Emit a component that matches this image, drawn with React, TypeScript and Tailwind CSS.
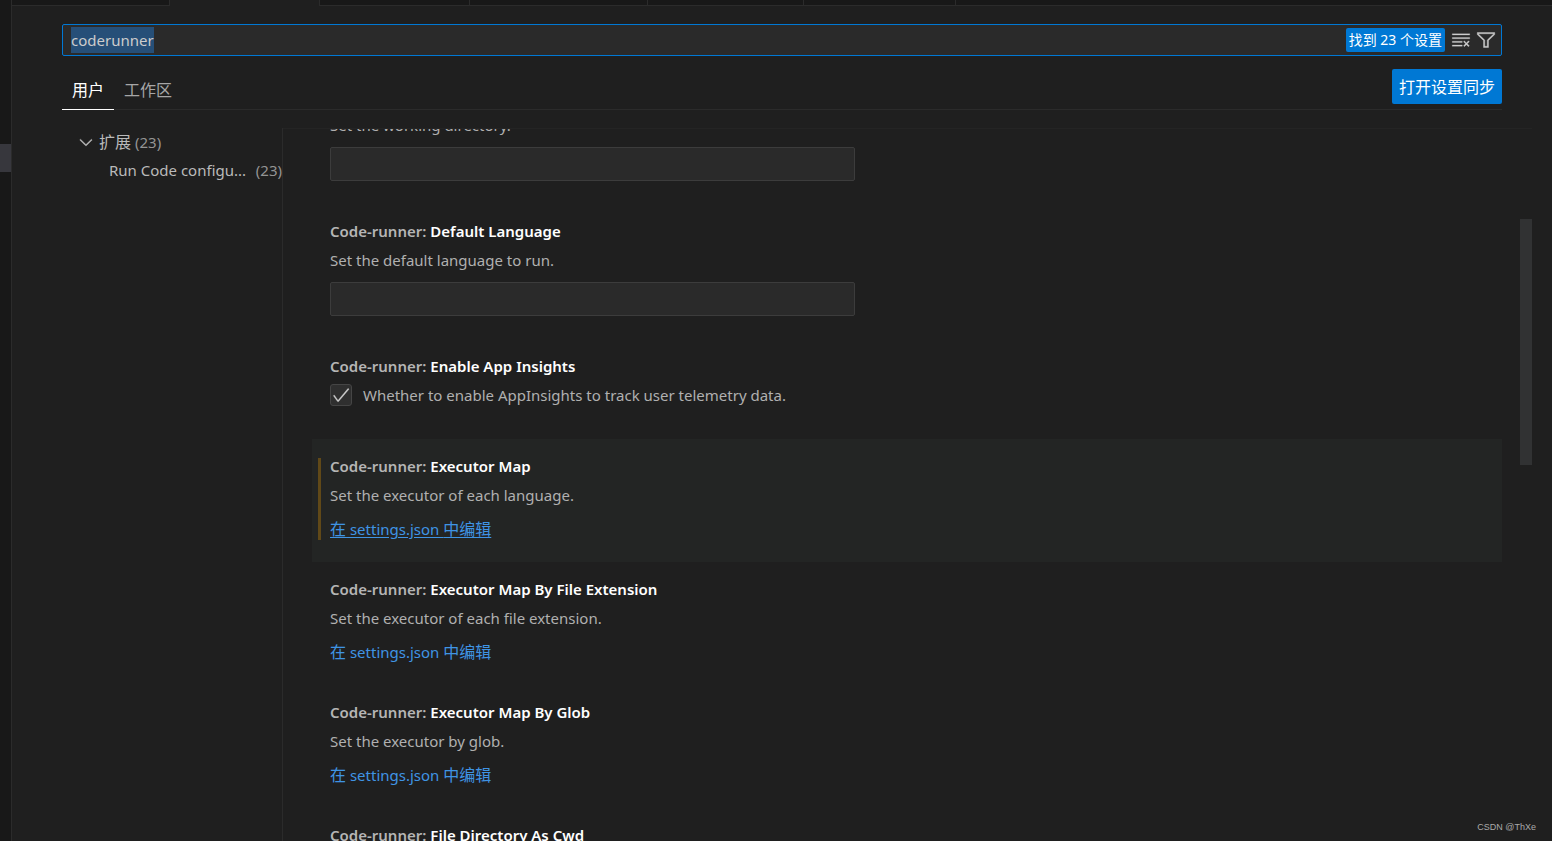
import { useEffect, useRef, type ReactNode } from "react";
import { VscCheck, VscChevronDown, VscClearAll, VscFilter } from "react-icons/vsc";

const editorTabs = [
  { id: "t1", width: "w-[158px]" },
  { id: "t2", width: "w-[150px]", active: true },
  { id: "t3", width: "w-[150px]" },
  { id: "t4", width: "w-[178px]" },
  { id: "t5", width: "w-[156px]" },
  { id: "t6", width: "w-[152px]" },
];

type Setting = {
  id: string;
  name: string;
  description: string;
  kind: "text" | "checkbox" | "json";
  focused?: boolean;
};

const settings: Setting[] = [
  { id: "cwd", name: "Cwd", description: "Set the working directory.", kind: "text" },
  { id: "defaultLanguage", name: "Default Language", description: "Set the default language to run.", kind: "text" },
  {
    id: "enableAppInsights",
    name: "Enable App Insights",
    description: "Whether to enable AppInsights to track user telemetry data.",
    kind: "checkbox",
  },
  {
    id: "executorMap",
    name: "Executor Map",
    description: "Set the executor of each language.",
    kind: "json",
    focused: true,
  },
  {
    id: "executorMapByFileExtension",
    name: "Executor Map By File Extension",
    description: "Set the executor of each file extension.",
    kind: "json",
  },
  { id: "executorMapByGlob", name: "Executor Map By Glob", description: "Set the executor by glob.", kind: "json" },
  {
    id: "fileDirectoryAsCwd",
    name: "File Directory As Cwd",
    description: "Whether to use the directory of the file to be executed as the working directory.",
    kind: "checkbox",
  },
];

function EditorTabs() {
  return (
    <div className="flex h-[6px] shrink-0">
      {editorTabs.map((tab) => (
        <div
          key={tab.id}
          className={`${tab.width} border-r border-[#2b2b2b] ${tab.active ? "bg-[#1f1f1f]" : "border-b bg-[#181818]"}`}
        />
      ))}
      <div className="flex-1 border-b border-[#2b2b2b] bg-[#181818]" />
    </div>
  );
}

function SearchBar() {
  const inputRef = useRef<HTMLInputElement>(null);

  useEffect(() => {
    inputRef.current?.focus();
    inputRef.current?.select();
  }, []);

  return (
    <div className="flex h-8 items-center rounded-[2px] border border-[#0078d4] bg-[#2a2a2a] pr-[5px] pl-2">
      <input
        ref={inputRef}
        type="text"
        aria-label="搜索设置"
        defaultValue="coderunner"
        spellCheck={false}
        className="h-[26px] min-w-0 flex-1 bg-transparent leading-[26px] text-[#cccccc] outline-none selection:bg-[#264f78] selection:text-[#cccccc]"
      />
      <span className="flex h-6 items-center rounded-[2px] bg-[#0078d4] px-[3px] text-sm text-white">
        找到 23 个设置
      </span>
      <button type="button" aria-label="清除设置搜索输入" className="ml-[6px] text-[#cccccc]">
        <VscClearAll size={20} className="stroke-current stroke-[0.2]" />
      </button>
      <button type="button" aria-label="筛选器设置" className="ml-[5px] text-[#cccccc]">
        <VscFilter size={20} className="stroke-current stroke-[0.3]" />
      </button>
    </div>
  );
}

function ScopeHeader() {
  return (
    <div className="mt-[13px] flex h-[41px] items-start justify-between border-b border-[#2b2b2b] text-base">
      <div className="flex h-[41px]">
        <button type="button" className="border-b border-white px-[10px] pt-px text-white">
          用户
        </button>
        <button type="button" className="px-[10px] text-[#a6a6a6]">
          工作区
        </button>
      </div>
      <button type="button" className="h-[35px] rounded-[2px] bg-[#0078d4] px-[7px] text-white">
        打开设置同步
      </button>
    </div>
  );
}

function Toc() {
  return (
    <nav className="w-[221px] shrink-0 border-r border-[#2b2b2b] text-[#bababa]">
      <a href="#extensions" className="flex h-7 items-center pl-[14px]">
        <VscChevronDown size={20} className="stroke-current stroke-[0.3]" />
        <span className="ml-[3px] text-base">扩展</span>
        <span className="ml-1 text-[#949494]">(23)</span>
      </a>
      <a href="#run-code" className="flex h-7 items-center justify-between pl-[47px] whitespace-nowrap">
        <span>Run Code configu...</span>
        <span className="text-[#949494]">(23)</span>
      </a>
    </nav>
  );
}

function SettingRow({ setting }: { setting: Setting }) {
  const { id, name, description, kind, focused } = setting;
  let control: ReactNode;

  if (kind === "text") {
    control = (
      <>
        <p className="mt-[7px]">{description}</p>
        <input
          id={id}
          type="text"
          className="mt-[11px] mb-[23px] block h-[34px] w-[525px] rounded-[2px] border border-[#3c3c3c] bg-[#2a2a2a] px-2 text-[#cccccc] outline-none"
        />
      </>
    );
  } else if (kind === "checkbox") {
    control = (
      <div className="mt-[7px] mb-[33px] flex h-[22px] items-center">
        <span className="grid place-items-center">
          <input
            id={id}
            type="checkbox"
            defaultChecked
            className="peer col-start-1 row-start-1 size-[22px] appearance-none rounded-[3px] border border-[#454545] bg-[#2f2f2f]"
          />
          <VscCheck
            size={20}
            className="pointer-events-none invisible col-start-1 row-start-1 stroke-current stroke-[0.2] text-[#cccccc] peer-checked:visible"
          />
        </span>
        <label htmlFor={id} className="ml-[11px]">
          {description}
        </label>
      </div>
    );
  } else {
    control = (
      <>
        <p className="mt-[7px]">{description}</p>
        <a
          href={`#${id}`}
          className={`mt-3 mb-[22px] block h-[22px] w-fit text-[#3f94e4] ${focused ? "underline underline-offset-2" : ""}`}
        >
          <span className="text-base/[22px]">在</span> settings.json <span className="text-base/[22px]">中编辑</span>
        </a>
      </>
    );
  }

  return (
    <section className={`relative flow-root px-[18px] pt-4 ${focused ? "bg-[#232524]" : ""}`}>
      {focused && <span className="absolute top-[19px] bottom-[22px] left-[6px] w-[3px] bg-[#614918]" />}
      <h3 className="font-semibold text-[#b5b5b5]">
        <label htmlFor={kind === "json" ? undefined : id}>
          Code-runner: <span className="text-white">{name}</span>
        </label>
      </h3>
      {control}
    </section>
  );
}

export default function App() {
  return (
    <div className="flex h-screen overflow-hidden bg-[#1f1f1f] font-['Noto_Sans','Noto_Sans_CJK_SC',sans-serif] text-[15px] leading-[22px]">
      <div className="w-3 shrink-0 border-r border-[#2b2b2b] bg-[#181818] pt-36">
        <div className="h-7 bg-[#37373d]" />
      </div>
      <main className="flex min-w-0 flex-1 flex-col">
        <EditorTabs />
        <div className="px-[50px] pt-[18px]">
          <SearchBar />
          <ScopeHeader />
        </div>
        <div className="mt-[18px] flex min-h-0 flex-1 pr-5 pl-[50px]">
          <Toc />
          <div className="flex min-w-0 flex-1 overflow-hidden border-t border-[#242424]">
            <div className="-mt-[60px] min-w-0 flex-1 pl-[29px] text-[#b0b0b0]">
              {settings.map((setting) => (
                <SettingRow key={setting.id} setting={setting} />
              ))}
            </div>
            <div className="ml-[18px] w-3 pt-[90px]">
              <div className="h-[246px] bg-[#313233]" />
            </div>
          </div>
        </div>
      </main>
      <span className="absolute right-4 bottom-2 font-['Liberation_Sans',sans-serif] text-[9px] leading-3 text-[#aaaaaa]">
        CSDN @ThXe
      </span>
    </div>
  );
}
